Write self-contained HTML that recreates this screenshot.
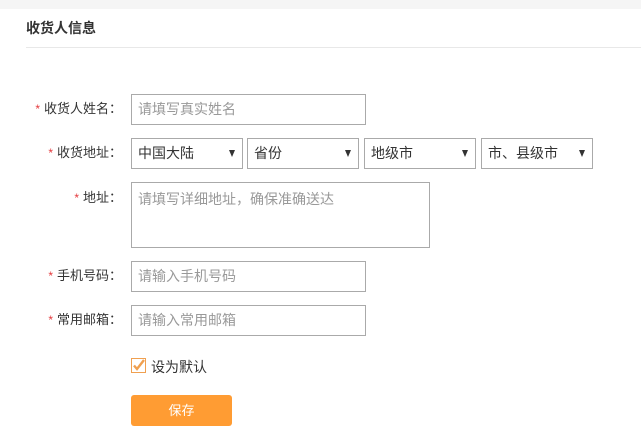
<!DOCTYPE html><html><head><meta charset="utf-8"><style>
*{margin:0;padding:0;box-sizing:border-box}
body{width:641px;height:440px;background:#fff;font-family:"Liberation Sans","Noto Sans CJK SC",sans-serif;position:relative;overflow:hidden;color:#333}
.top{position:absolute;left:0;top:0;width:641px;height:9px;background:#f5f5f5}
.title{position:absolute;left:26px;top:18px;font-size:14px;font-weight:bold;color:#333}
.line{position:absolute;left:26px;right:0;top:47px;border-top:1px solid #e8e8e8}
.lab{position:absolute;right:519px;font-size:13px;color:#333;white-space:nowrap;line-height:30px}
.lab b{color:#e4393c;font-weight:normal;margin-right:4px;font-size:12px}
.box{position:absolute;border:1px solid #aaa;font-size:14px;padding-left:6px;line-height:28px;color:#999;background:#fff}
.sel{color:#333}
.sel:after{content:"";position:absolute;right:7px;top:11px;border-left:3.5px solid transparent;border-right:3.5px solid transparent;border-top:7px solid #333}
</style></head><body>
<div class="top"></div>
<div class="title">收货人信息</div>
<div class="line"></div>
<div class="lab" style="top:94px"><b>*</b>收货人姓名：</div>
<div class="box" style="left:131px;top:94px;width:235px;height:31px">请填写真实姓名</div>
<div class="lab" style="top:138px"><b>*</b>收货地址：</div>
<div class="box sel" style="left:131px;top:138px;width:112px;height:31px">中国大陆</div>
<div class="box sel" style="left:247px;top:138px;width:112px;height:31px">省份</div>
<div class="box sel" style="left:364px;top:138px;width:112px;height:31px">地级市</div>
<div class="box sel" style="left:481px;top:138px;width:112px;height:31px">市、县级市</div>
<div class="lab" style="top:182px;line-height:32px"><b>*</b>地址：</div>
<div class="box" style="left:131px;top:182px;width:299px;height:66px;line-height:32px">请填写详细地址，确保准确送达</div>
<div class="lab" style="top:261px"><b>*</b>手机号码：</div>
<div class="box" style="left:131px;top:261px;width:235px;height:31px">请输入手机号码</div>
<div class="lab" style="top:305px"><b>*</b>常用邮箱：</div>
<div class="box" style="left:131px;top:305px;width:235px;height:31px">请输入常用邮箱</div>
<div style="position:absolute;left:131px;top:358px;width:15px;height:15px;border:1px solid #f0a050;background:#fff">
<svg width="13" height="13" viewBox="0 0 13 13" style="position:absolute;left:0;top:0"><path d="M2 6.5 L5 10 L12 1" stroke="#f0a050" stroke-width="2.4" fill="none"/></svg></div>
<div style="position:absolute;left:151px;top:357px;font-size:14px;color:#333">设为默认</div>
<div style="position:absolute;left:131px;top:395px;width:101px;height:31px;background:#ff9c33;border-radius:3px;color:#fff;font-size:13px;text-align:center;line-height:31px">保存</div>
</body></html>
